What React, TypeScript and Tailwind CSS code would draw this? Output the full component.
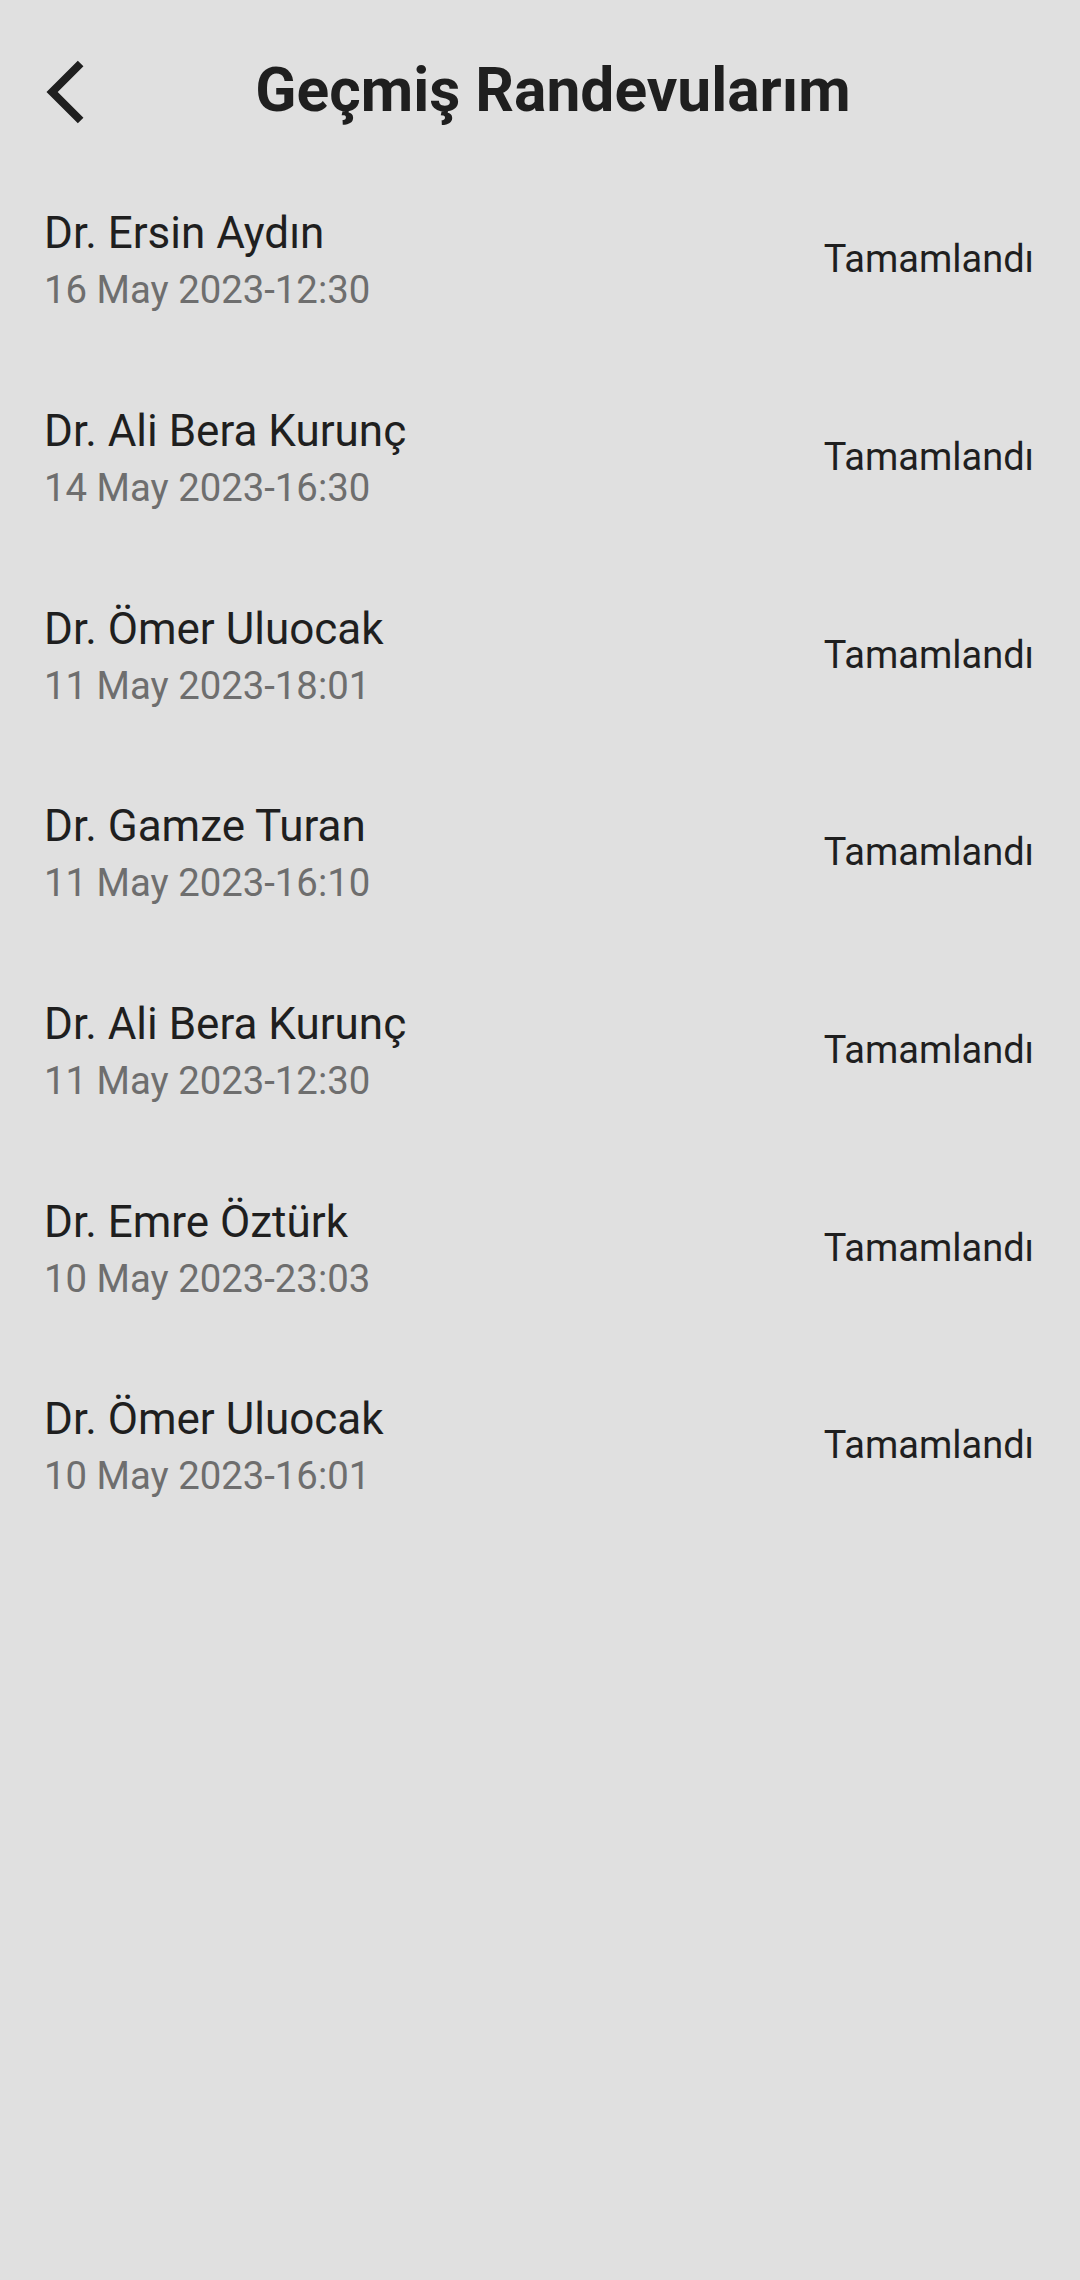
import React from 'react';

interface Appointment {
  doctor: string;
  date: string;
  status: string;
}

const appointments: Appointment[] = [
  { doctor: 'Dr. Ersin Aydın', date: '16 May 2023-12:30', status: 'Tamamlandı' },
  { doctor: 'Dr. Ali Bera Kurunç', date: '14 May 2023-16:30', status: 'Tamamlandı' },
  { doctor: 'Dr. Ömer Uluocak', date: '11 May 2023-18:01', status: 'Tamamlandı' },
  { doctor: 'Dr. Gamze Turan', date: '11 May 2023-16:10', status: 'Tamamlandı' },
  { doctor: 'Dr. Ali Bera Kurunç', date: '11 May 2023-12:30', status: 'Tamamlandı' },
  { doctor: 'Dr. Emre Öztürk', date: '10 May 2023-23:03', status: 'Tamamlandı' },
  { doctor: 'Dr. Ömer Uluocak', date: '10 May 2023-16:01', status: 'Tamamlandı' },
];

const BackIcon = () => (
  <svg width="76" height="76" viewBox="0 0 24 24" fill="#1f1f1f">
    <path d="M17.51 3.87L15.73 2.1 5.84 12l9.9 9.9 1.77-1.77L9.38 12l8.13-8.13z" />
  </svg>
);

export default function App() {
  return (
    <div
      className="min-h-[2280px] w-full bg-[#e0e0e0] text-[#1f1f1f]"
      style={{ fontFamily: 'Roboto, "Noto Sans", sans-serif' }}
    >
      <div className="flex h-[161px] items-center pt-[22px] pl-[28px] pr-[78px]">
        <button className="flex h-[76px] w-[76px] items-center justify-center">
          <BackIcon />
        </button>
        <h1 className="flex-1 text-center text-[60.5px] font-bold leading-none">
          Geçmiş Randevularım
        </h1>
      </div>

      <div className="flex flex-col">
        {appointments.map((a, i) => {
          return (
            <div
              className="flex h-[197.7px] items-center justify-between pl-[44px] pr-[46px]"
              key={i}
            >
              <div className="flex flex-col">
                <span className="text-[44px] leading-[60px]">{a.doctor}</span>
                <span className="text-[38.3px] leading-[53px] text-[#6e6e6e]">
                  {a.date}
                </span>
              </div>
              <span className="text-[38px]">{a.status}</span>
            </div>
          );
        })}
      </div>
    </div>
  );
}
